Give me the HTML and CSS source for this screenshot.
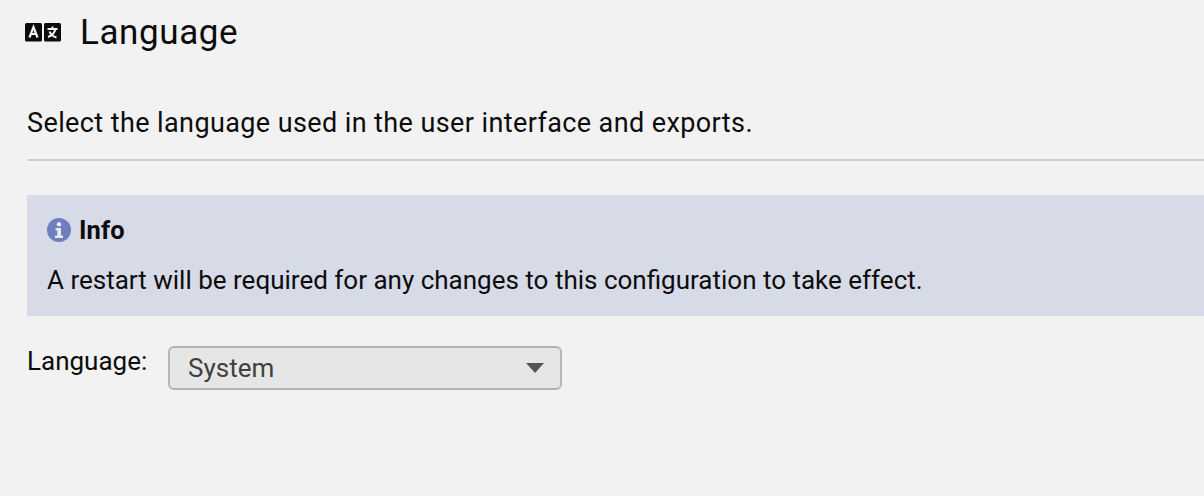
FILE: index.html
```html
<!DOCTYPE html>
<html lang="en">
<head>
<meta charset="utf-8">
<title>Language</title>
<link rel="stylesheet" href="styles.css">
</head>
<body>
<main class="page">
  <header class="title-row">
    <svg class="title-icon" viewBox="0 0 36 19" width="36" height="19" aria-hidden="true">
      <rect x="0" y="0" width="17" height="18.500" rx="1.500" fill="#0c0c0c"/>
      <rect x="19" y="0" width="17" height="18.500" rx="1.500" fill="#0c0c0c"/>
      <path d="M4.500 14.500 8.500 4 12.500 14.500M6 11h5" fill="none" stroke="#f2f2f2" stroke-width="2.200"/>
      <path d="M22.500 6h10M27.500 3.500v2.500M30.500 6c-1 4-3.500 6.500-7.500 8M24.500 8.500c1 3 3.500 5 7 6" fill="none" stroke="#f2f2f2" stroke-width="2"/>
    </svg>
    <h1 class="title">Language</h1>
  </header>
  <p class="description">Select the language used in the user interface and exports.</p>
  <hr class="divider">
  <section class="info">
    <div class="info-head">
      <svg class="info-icon" viewBox="0 0 24 24" width="24" height="24" aria-hidden="true">
        <circle cx="12" cy="12" r="12" fill="#6f7fbd"/>
        <circle cx="12" cy="6.300" r="2.300" fill="#e6e8f2"/>
        <path d="M8.500 10h5.500v7.500h2v2.500H8v-2.500h2.200v-5H8.500z" fill="#e6e8f2"/>
      </svg>
      <strong class="info-title">Info</strong>
    </div>
    <p class="info-text">A restart will be required for any changes to this configuration to take effect.</p>
  </section>
  <div class="field">
    <span class="field-label">Language:</span>
    <div class="select">
      <span class="select-value">System</span>
      <span class="select-arrow"></span>
    </div>
  </div>
</main>
</body>
</html>
```

FILE: styles.css
```css
html, body {
  margin: 0;
  height: 100%;
  background: #f2f2f2;
  overflow: hidden;
}
.page {
  box-sizing: border-box;
  height: 496px;
  padding: 13px 0 0 27px;
  font-family: Roboto, "Noto Sans", sans-serif;
  color: #0c0c0c;
}
.title-row {
  display: flex;
  align-items: center;
  height: 38px;
  margin-left: -2px;
}
.title-icon {
  flex: none;
  margin-right: 19px;
}
.title {
  margin: 0;
  font-size: 35px;
  line-height: 38px;
  font-weight: 400;
  letter-spacing: 0.6px;
  transform: translateY(1px);
}
.description {
  margin: 54px 0 0;
  font-size: 27px;
  line-height: 36px;
  letter-spacing: 0.4px;
}
.divider {
  height: 2px;
  margin: 18px 0 0;
  border: 0;
  background: #cfcfcf;
}
.info {
  box-sizing: border-box;
  height: 121px;
  margin-top: 34px;
  padding: 18px 20px 0;
  background: #d7dae7;
}
.info-head {
  display: flex;
  align-items: center;
  gap: 8px;
  height: 34px;
}
.info-icon {
  flex: none;
}
.info-title {
  font-size: 25.500px;
  line-height: 34px;
  font-weight: 700;
  letter-spacing: 0.1px;
}
.info-text {
  margin: 16px 0 0;
  font-size: 26px;
  line-height: 34px;
}
.field {
  display: flex;
  align-items: flex-start;
  margin-top: 30px;
}
.field-label {
  width: 141px;
  flex: none;
  font-size: 26px;
  line-height: 30px;
}
.select {
  box-sizing: border-box;
  display: flex;
  align-items: center;
  justify-content: space-between;
  width: 394px;
  height: 44px;
  padding: 0 16px 0 18px;
  border: 2px solid #b5b5b5;
  border-radius: 6px;
  background: #e6e6e6;
}
.select-value {
  font-size: 26px;
  line-height: 38px;
  color: #404040;
}
.select-arrow {
  width: 0;
  height: 0;
  border-style: solid;
  border-width: 10px 9px 0;
  border-color: #555 transparent transparent;
}
```
